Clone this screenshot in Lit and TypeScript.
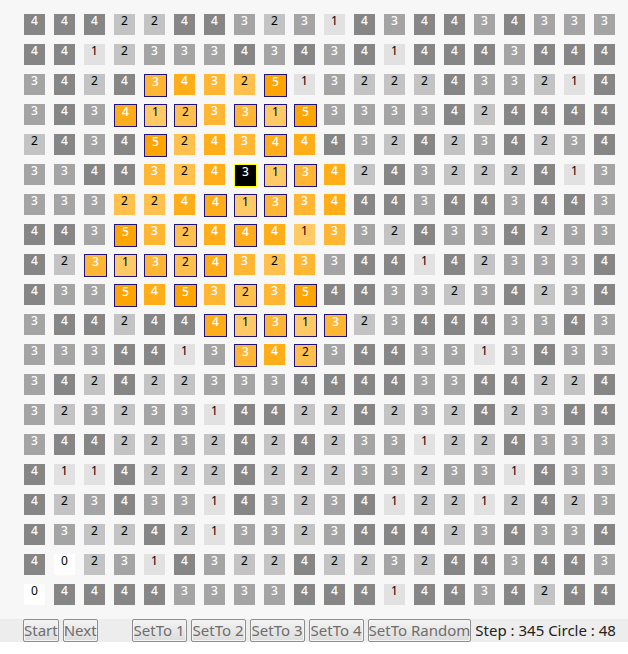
import { LitElement, html, css } from "lit";
import { customElement, property, state } from "lit/decorators.js";
import { classMap } from "lit/directives/class-map.js";

// One string per row. A digit is the cell's value; the mark after it is
// "." idle, "o" touched in this step, "b" toppled, "k" current.
const ROWS: string[] = [
  "4.4.4.2.2.4.4.3.2.3.1.4.3.4.4.3.4.3.3.3.",
  "4.4.1.2.3.3.3.4.3.4.3.4.1.4.4.4.3.4.4.4.",
  "3.4.2.4.3b4o3o2o5b1.3.2.2.2.4.3.3.2.1.4.",
  "3.4.3.4b1b2b3o3b1b5b3.3.3.3.4.2.4.4.4.4.",
  "2.4.3.4.5b2o4o3o4b4o4.3.2.4.2.3.4.2.3.4.",
  "3.3.4.4.3o2o4o3k1b3b4o2.4.3.2.2.2.4.1.3.",
  "3.3.3.2o2o4o4b1b3b3o4o4.4.3.4.4.3.4.4.3.",
  "4.4.3.5b3o2b4o4b4o1o3o3.2.4.3.3.4.2.3.3.",
  "4.2.3b1b3b2b4b3o2o3o3.4.4.1.4.2.3.3.3.4.",
  "4.3.3.5b4o5b3o2b3o5b4.4.3.3.2.3.4.2.3.4.",
  "3.4.4.2.4.4.4b1b3b1b3b2.3.4.4.4.3.3.4.3.",
  "3.3.3.4.4.1.3.3b4o2b3.4.4.3.3.1.3.4.3.3.",
  "3.4.2.4.2.2.3.3.3.4.4.4.4.3.3.4.4.2.2.4.",
  "3.2.3.2.3.3.1.4.4.2.2.4.2.3.2.4.2.3.4.4.",
  "3.4.4.2.2.3.2.4.2.4.2.3.3.1.2.2.4.3.3.3.",
  "4.1.1.4.2.2.2.4.2.2.2.3.3.2.3.3.1.4.3.3.",
  "4.2.3.4.3.3.1.4.3.2.3.4.1.2.2.1.2.4.2.3.",
  "4.3.2.2.4.2.1.3.3.2.3.4.4.4.2.3.4.3.3.4.",
  "4.0.2.3.1.4.3.2.2.4.2.2.3.2.4.4.3.4.4.3.",
  "0.4.4.4.4.3.3.3.3.4.4.4.1.4.4.3.4.2.4.4.",
];

interface Cell {
  value: number;
  mark: string;
}

const parseRow = (row: string): Cell[] =>
  (row.match(/../g) ?? []).map((c) => ({ value: Number(c[0]), mark: c[1] }));

@customElement("sand-board")
export class SandBoard extends LitElement {
  static styles = css`
    :host {
      display: block;
      padding: 14px 13px 14px 24px;
      background: #f7f7f7;
    }
    .grid {
      display: flex;
      flex-direction: column;
      gap: 9px;
    }
    .row {
      display: grid;
      grid-template-columns: repeat(20, 21px);
      grid-auto-rows: 21px;
      justify-content: space-between;
    }
    .cell {
      width: 21px;
      height: 21px;
      font: 12px/14px "Noto Sans", "Open Sans", sans-serif;
      text-align: center;
      color: #000;
    }
    .v0 { background: #fff; }
    .v1 { background: #e1e1e1; }
    .v2 { background: #c3c3c3; }
    .v3 { background: #a4a4a4; }
    .v4 { background: #868686; }
    .v3, .v4, .v5 { color: #fff; font-weight: 500; }
    .hot.v1 { background: #ffc966; }
    .hot.v2 { background: #ffc04d; }
    .hot.v3 { background: #ffb733; }
    .hot.v4 { background: #ffae1a; }
    .hot.v5 { background: #ffa500; }
    .toppled { border: 1px solid #20147c; }
    .cell.current { background: #000; border: 1px solid #ff0; }
  `;

  @property({ attribute: false }) rows: Cell[][] = [];

  render() {
    return html`<div class="grid" role="grid" aria-label="Board">
      ${this.rows.map(
        (row) => html`<div class="row" role="row">
          ${row.map(
            ({ value, mark }) => html`<div
              role="gridcell"
              class=${classMap({
                cell: true,
                [`v${value}`]: true,
                hot: mark !== ".",
                toppled: mark === "b",
                current: mark === "k",
              })}
            >${value}</div>`
          )}
        </div>`
      )}
    </div>`;
  }
}

@customElement("app-root")
export class AppRoot extends LitElement {
  static styles = css`
    :host {
      display: block;
      background: #fff;
    }
    .bar {
      display: flex;
      flex-wrap: wrap;
      align-items: center;
      gap: 4px;
      padding-left: 23px;
      background: #ededed;
      font: 15px/21px "Noto Sans", "Open Sans", sans-serif;
      color: #222;
    }
    .group {
      display: flex;
      gap: 4px;
      margin-right: 30px;
    }
    button {
      box-sizing: border-box;
      height: 23px;
      margin: 0;
      padding: 0;
      border: 1px solid #8e8e8e;
      border-radius: 2px;
      background: linear-gradient(#f3f3f3, #dcdcdc);
      box-shadow: inset 0 0 0 1px #f5f5f5;
      font: inherit;
      color: #6d6d6d;
      white-space: nowrap;
    }
    .preset {
      min-width: 55px;
    }
    .status {
      white-space: nowrap;
    }
  `;

  @state() private rows = ROWS.map(parseRow);
  @state() private step = 345;
  @state() private circle = 48;

  private fill(next: () => number) {
    this.rows = this.rows.map((r) => r.map(() => ({ value: next(), mark: "." })));
  }

  render() {
    return html`
      <sand-board .rows=${this.rows}></sand-board>
      <div class="bar">
        <div class="group">
          <button type="button">Start</button>
          <button type="button">Next</button>
        </div>
        ${[1, 2, 3, 4].map(
          (n) => html`<button class="preset" type="button" @click=${() => this.fill(() => n)}>SetTo ${n}</button>`
        )}
        <button class="preset" type="button" @click=${() => this.fill(() => Math.floor(Math.random() * 5))}>SetTo Random</button>
        <span class="status">Step : ${this.step} Circle : ${this.circle}</span>
      </div>
    `;
  }
}
